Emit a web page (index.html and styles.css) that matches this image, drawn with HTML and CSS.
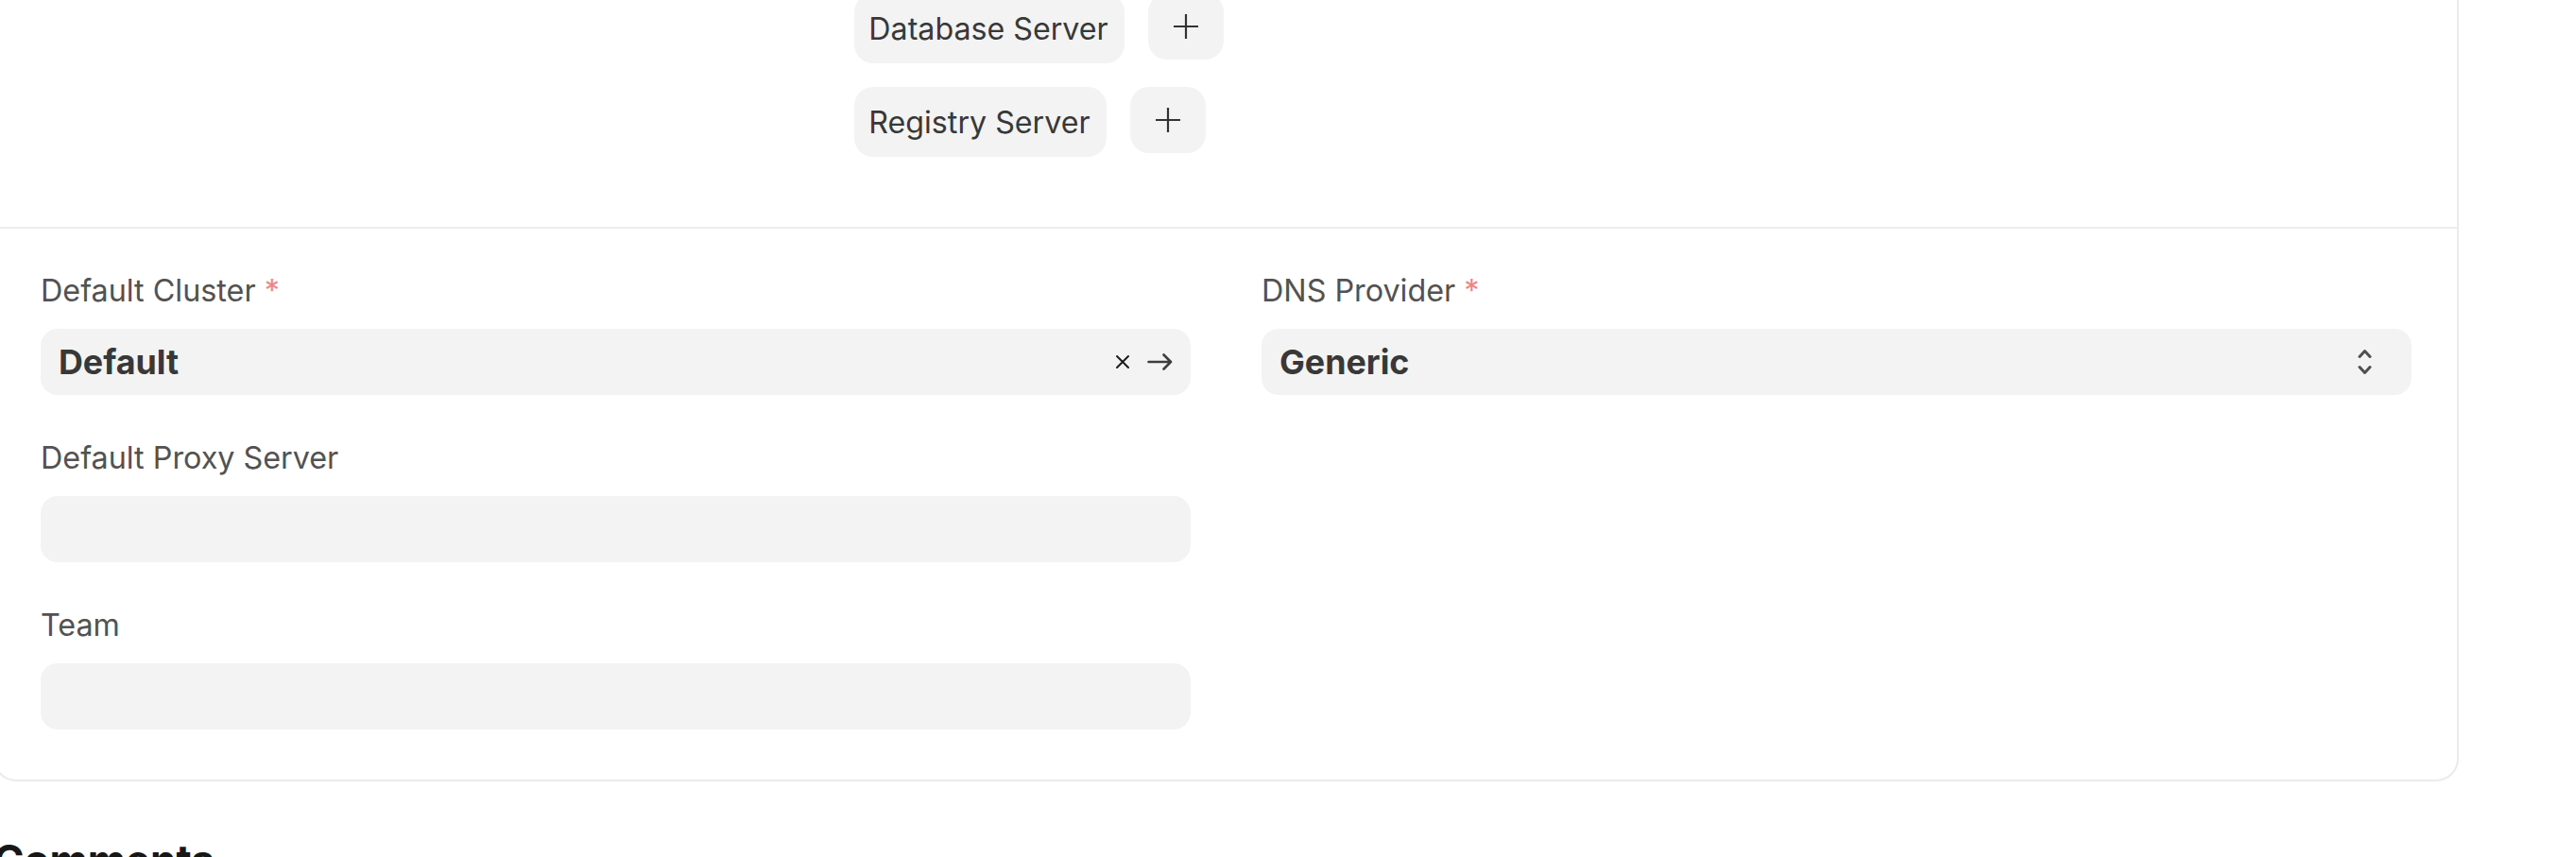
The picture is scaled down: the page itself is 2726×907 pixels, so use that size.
FILE: index.html
```html
<!DOCTYPE html>
<html lang="en">
<head>
<meta charset="utf-8">
<title>Settings</title>
<link rel="stylesheet" href="styles.css">
</head>
<body>
<div class="page">
  <div class="card">
    <section class="top-section">
      <div class="col"></div>
      <div class="col link-list">
        <div class="link-row">
          <span class="pill">Database Server</span>
          <button class="plus-btn" aria-label="Add Database Server">
            <svg width="28" height="28" viewBox="0 0 28 28"><path d="M14 1V27M1 14H27" stroke="#333" stroke-width="2.2" fill="none"/></svg>
          </button>
        </div>
        <div class="link-row">
          <span class="pill">Registry Server</span>
          <button class="plus-btn" aria-label="Add Registry Server">
            <svg width="28" height="28" viewBox="0 0 28 28"><path d="M14 1V27M1 14H27" stroke="#333" stroke-width="2.2" fill="none"/></svg>
          </button>
        </div>
      </div>
      <div class="col"></div>
    </section>
    <section class="form-section">
      <div class="form-col">
        <div class="field">
          <label class="label">Default Cluster <span class="req">*</span></label>
          <div class="input">
            <span class="value">Default</span>
            <span class="actions">
              <svg class="icon-x" width="16" height="16" viewBox="0 0 16 16"><path d="M2 2L14 14M14 2L2 14" stroke="#1c1c1c" stroke-width="2" fill="none" stroke-linecap="round"/></svg>
              <svg class="icon-arrow" width="27" height="18" viewBox="0 0 27 18"><path d="M1.5 9H25M17.5 1.5L25 9L17.5 16.5" stroke="#3d3d3d" stroke-width="2.6" fill="none" stroke-linecap="round" stroke-linejoin="round"/></svg>
            </span>
          </div>
        </div>
        <div class="field">
          <label class="label">Default Proxy Server</label>
          <div class="input"></div>
        </div>
        <div class="field">
          <label class="label">Team</label>
          <div class="input"></div>
        </div>
      </div>
      <div class="form-col">
        <div class="field">
          <label class="label">DNS Provider <span class="req">*</span></label>
          <div class="input select">
            <span class="value">Generic</span>
            <svg class="icon-chev" width="15" height="30" viewBox="0 0 15 30"><path d="M2 9.5L7.5 3.5L13 9.5M2 20.5L7.5 26.5L13 20.5" stroke="#4f4f4f" stroke-width="3" fill="none" stroke-linecap="round" stroke-linejoin="round"/></svg>
          </div>
        </div>
      </div>
    </section>
  </div>
  <h2 class="comments">Comments</h2>
</div>
</body>
</html>
```

FILE: styles.css
```css
* { box-sizing: border-box; }

html, body {
  margin: 0;
  padding: 0;
  background: #ffffff;
}

body {
  font-family: Inter, "Noto Sans", sans-serif;
  color: #383838;
  overflow: hidden;
}

.page {
  margin-left: -7px;
  margin-top: -40px;
  width: 2609px;
}

.card {
  border: 2px solid #ebebeb;
  border-radius: 24px;
  background: #fff;
}

.top-section {
  display: grid;
  grid-template-columns: 1fr 1fr 1fr;
  column-gap: 75px;
  padding: 31px 48px 74px 48px;
}

.link-list {
  display: flex;
  flex-direction: column;
  gap: 25px;
}

.link-row {
  display: flex;
  align-items: flex-start;
  gap: 25px;
}

.pill {
  display: inline-flex;
  align-items: center;
  height: 74px;
  padding: 0 17px 0 15px;
  background: #f3f3f3;
  border-radius: 20px;
  font-size: 32.2px;
  color: #383838;
  white-space: nowrap;
}

.plus-btn {
  width: 80px;
  height: 70px;
  border: none;
  background: #f3f3f3;
  border-radius: 20px;
  display: flex;
  align-items: center;
  justify-content: center;
  padding: 0;
}

.plus-btn svg { display: block; }

.form-section {
  border-top: 2px solid #ededed;
  display: grid;
  grid-template-columns: 1fr 1fr;
  column-gap: 75px;
  padding: 47px 48px 53px 48px;
}

.form-col {
  display: flex;
  flex-direction: column;
  gap: 48px;
}

.field {
  display: flex;
  flex-direction: column;
  gap: 21px;
}

.label {
  font-size: 32.3px;
  line-height: 38px;
  color: #525252;
}

.req {
  color: #ef8585;
}

.input {
  height: 70px;
  background: #f3f3f3;
  border-radius: 18px;
  display: flex;
  align-items: center;
  justify-content: space-between;
  padding: 0 19px 0 19px;
}

.value {
  font-size: 35.8px;
  font-weight: 700;
  color: #383838;
}

.actions {
  display: flex;
  align-items: center;
  gap: 18px;
}

.actions svg { display: block; }

.select {
  padding-right: 42px;
}

.icon-chev { display: block; }

.comments {
  margin: 57px 0 0 0;
  font-size: 44px;
  line-height: 53px;
  font-weight: 700;
  color: #171717;
}
```
